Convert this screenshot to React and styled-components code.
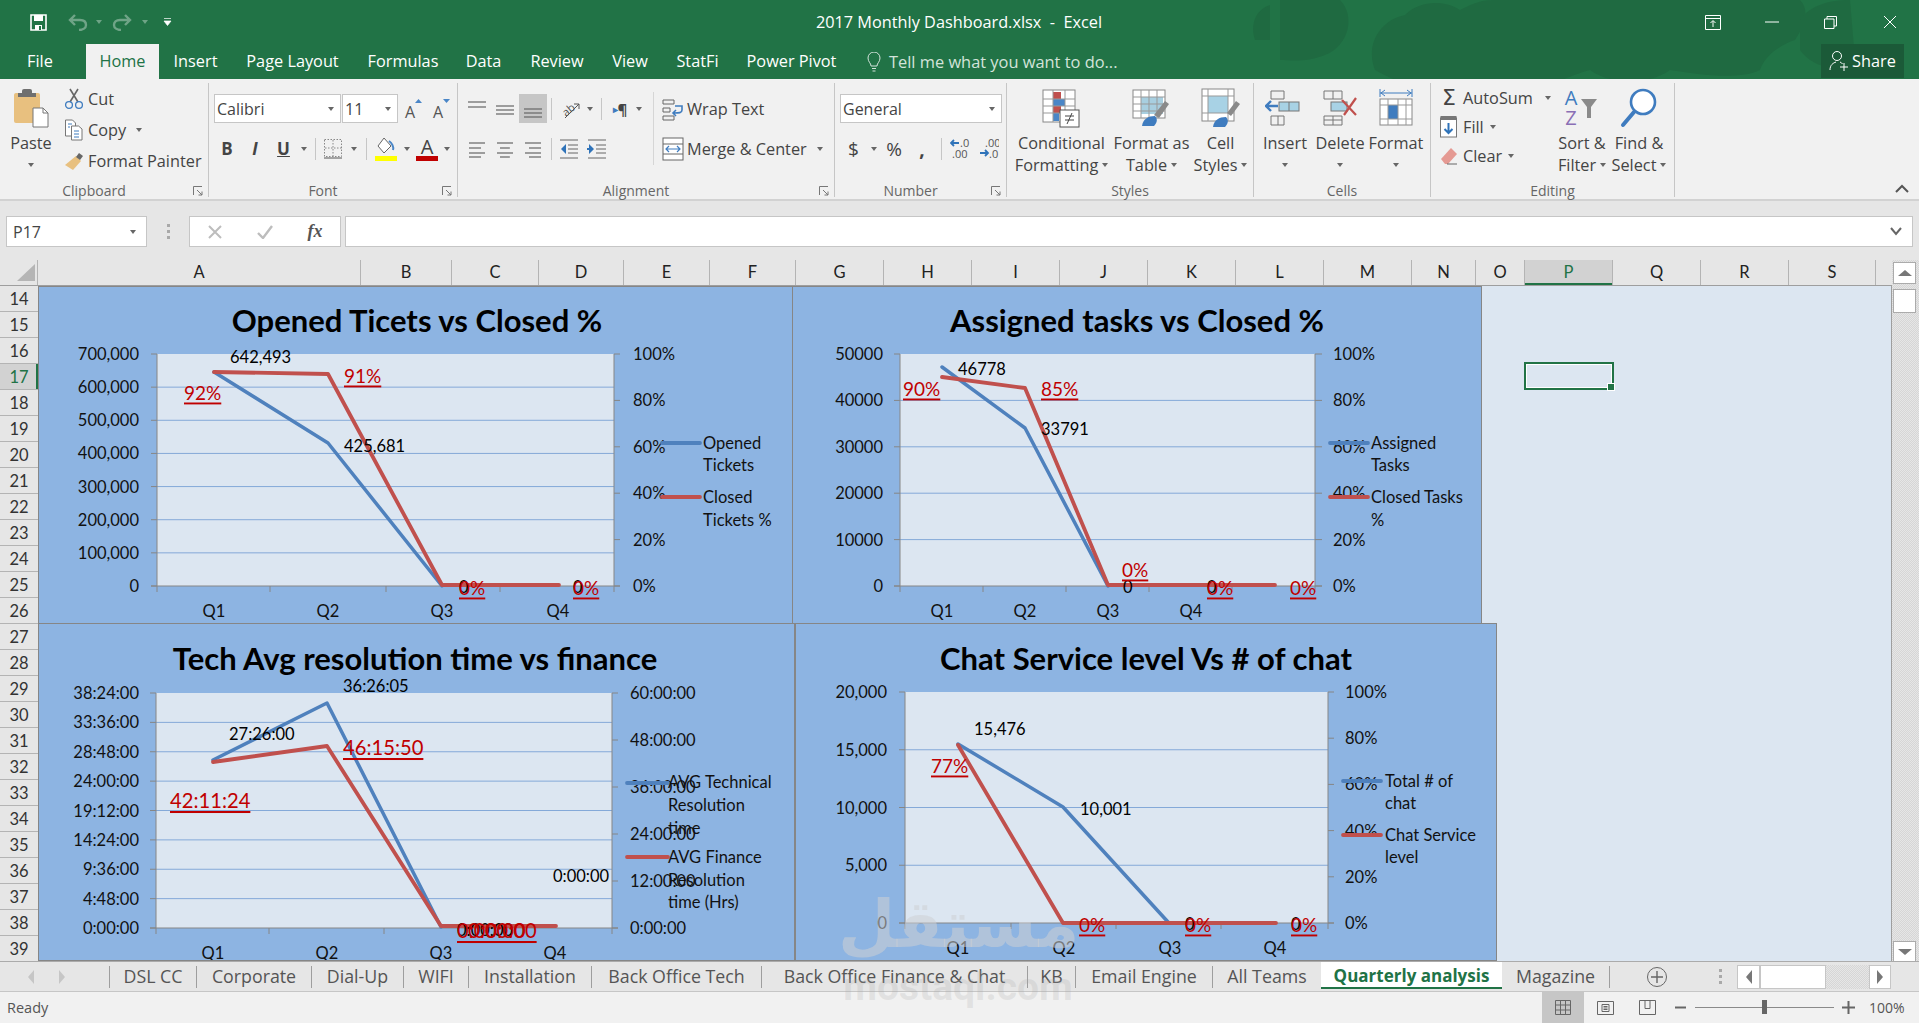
import React from "react";
import styled, { createGlobalStyle } from "styled-components";

const UI = `"Open Sans", "Noto Sans", sans-serif`;
const CAL = `Lato, "Open Sans", sans-serif`;
const FS = "16.3px";

const GlobalStyle = createGlobalStyle`
  html, body { margin: 0; padding: 0; background: #f1f1f1; }
  #root { height: 100vh; }
`;

const Page = styled.div`
  position: relative;
  width: 1919px;
  height: 1023px;
  overflow: hidden;
  display: flex;
  flex-direction: column;
  font-family: ${UI};
  color: #444;
`;

/* ---------- green header ---------- */
const Header = styled.header`
  position: relative;
  height: 79px;
  flex: none;
  background: #217346;
  color: #fff;
`;
const HeaderArt = styled.svg`
  position: absolute;
  inset: 0;
`;
const TitleRow = styled.div`
  position: relative;
  height: 44px;
  display: flex;
  align-items: center;
`;
const Qat = styled.div`
  display: flex;
  align-items: center;
  width: 620px;
  margin-right: -30px;
  padding-left: 28px;
  box-sizing: border-box;
`;
const QatSlot = styled.span`
  width: ${(p) => p.$w}px;
  display: flex;
  justify-content: center;
  opacity: ${(p) => (p.$dim ? 0.35 : 1)};
`;
const DocTitle = styled.div`
  width: 738px;
  text-align: center;
  font-size: ${FS};
  white-space: pre;
`;
const WinButtons = styled.div`
  display: flex;
  margin-left: auto;
`;
const WinBtn = styled.span`
  width: 59px;
  height: 40px;
  display: flex;
  align-items: center;
  justify-content: center;
`;
const TabRow = styled.nav`
  position: relative;
  height: 35px;
  display: flex;
`;
const RibbonTab = styled.div`
  width: ${(p) => p.$w}px;
  margin-left: ${(p) => p.$ml || 0}px;
  text-align: center;
  line-height: 35px;
  font-size: ${FS};
  white-space: nowrap;
  background: ${(p) => (p.$active ? "#f1f1f1" : "transparent")};
  color: ${(p) => (p.$active ? "#217346" : "#fff")};
`;
const TellMe = styled.div`
  display: flex;
  align-items: center;
  margin-left: 18px;
  gap: 7px;
  font-size: 16.4px;
  color: #d3e3da;
  white-space: nowrap;
`;
const ShareBtn = styled.div`
  margin-left: auto;
  margin-right: 15px;
  width: 83px;
  height: 34px;
  background: #1b5a38;
  display: flex;
  align-items: center;
  justify-content: center;
  gap: 3px;
  font-size: ${FS};
`;

/* ---------- ribbon ---------- */
const Ribbon = styled.section`
  height: 122px;
  flex: none;
  background: #f1f1f1;
  border-bottom: 2px solid #d2d2d2;
  box-sizing: border-box;
  display: flex;
  padding-top: 4px;
`;
const Group = styled.div`
  width: ${(p) => p.$w}px;
  height: 114px;
  box-sizing: border-box;
  border-right: 1px solid #c6c6c6;
  display: flex;
  flex-direction: column;
  flex: none;
`;
const GroupBody = styled.div`
  height: 98px;
  display: flex;
  flex: none;
`;
const GroupFoot = styled.div`
  display: grid;
  grid-template-columns: ${(p) => (p.$launcher ? "1fr auto 1fr 20px" : "1fr auto 1fr")};
  align-items: center;
  height: 16px;
  padding: 0 5px;
  font-size: 14px;
  color: #666;
`;
const Launcher = styled.svg`
  justify-self: end;
`;
const Collapse = styled.div`
  flex: 1;
  display: flex;
  align-items: flex-end;
  justify-content: flex-end;
  padding: 0 10px 6px 0;
`;
const BigButton = styled.div`
  width: ${(p) => p.$w}px;
  flex: none;
  display: flex;
  flex-direction: column;
  align-items: center;
  padding-top: 5px;
  font-size: ${FS};
  color: #444;
`;
const BigIcon = styled.div`
  height: 40px;
  margin-bottom: 4px;
  display: flex;
  align-items: center;
  justify-content: center;
`;
const Line = styled.div`
  height: 22px;
  line-height: 22px;
  white-space: nowrap;
  display: flex;
  align-items: center;
  gap: ${(p) => p.$gap ?? 4}px;
  margin-left: ${(p) => p.$ml || 0}px;
`;
const Caret = styled.span`
  display: inline-block;
  width: 0;
  height: 0;
  margin-left: ${(p) => p.$ml || 0}px;
  border-left: 3.5px solid transparent;
  border-right: 3.5px solid transparent;
  border-top: 4px solid ${(p) => p.$c || "#666"};
`;
const SmallCol = styled.div`
  width: ${(p) => p.$w}px;
  flex: none;
  padding-left: ${(p) => p.$pl || 0}px;
  box-sizing: border-box;
`;
const SmallRow = styled.div`
  height: ${(p) => p.$h || 31}px;
  display: flex;
  align-items: center;
  font-size: ${FS};
  white-space: nowrap;
  gap: 2px;
`;
const IconSlot = styled.span`
  width: 24px;
  flex: none;
  display: flex;
  justify-content: center;
`;
const SigmaGlyph = styled.span`
  font-family: "DejaVu Sans", sans-serif;
  font-size: 22px;
  line-height: 24px;
  color: #444;
`;
const ToolCol = styled.div`
  padding-left: 5px;
  padding-top: 11px;
  width: ${(p) => p.$w || "auto"}px;
  flex: none;
  box-sizing: border-box;
  font-size: ${FS};
`;
const ToolRow = styled.div`
  display: flex;
  align-items: center;
  height: 29px;
  margin-bottom: ${(p) => p.$mb || 0}px;
`;
const Slot = styled.span`
  width: ${(p) => p.$w}px;
  height: 29px;
  flex: none;
  display: flex;
  align-items: center;
  justify-content: center;
  background: ${(p) => (p.$on ? "#c6c6c6" : "transparent")};
  font: ${(p) => p.$font || "inherit"};
  color: #444;
`;
const PilcrowArrow = styled.span`
  color: #3f7cbf;
  font-size: 10px;
`;
const VRule = styled.span`
  width: 1px;
  height: 22px;
  background: #c6c6c6;
`;
const TallRule = styled.div`
  width: 1px;
  height: 73px;
  margin: 9px 2px 0 5px;
  background: #d6d6d6;
  flex: none;
`;
const ComboBox = styled.div`
  width: ${(p) => p.$w}px;
  height: 29px;
  box-sizing: border-box;
  flex: none;
  margin-right: ${(p) => p.$mr || 0}px;
  background: #fff;
  border: 1px solid #c6c6c6;
  display: flex;
  align-items: center;
  justify-content: space-between;
  padding: 0 6px 0 2px;
  font-size: 16px;
`;

/* ---------- formula bar ---------- */
const FormulaBar = styled.section`
  height: 59px;
  flex: none;
  box-sizing: border-box;
  background: #e6e6e6;
  display: flex;
  padding: 15px 6px 13px 6px;
`;
const Field = styled.div`
  box-sizing: border-box;
  width: ${(p) => (p.$w ? `${p.$w}px` : "auto")};
  flex: ${(p) => (p.$w ? "none" : 1)};
  background: #fff;
  border: 1px solid #c6c6c6;
  display: flex;
  align-items: center;
  justify-content: space-between;
  padding: ${(p) => (p.$flush ? "0" : "0 10px 0 6px")};
  font-size: 16px;
  margin-left: ${(p) => p.$ml || 0}px;
`;
const GripDots = styled.div`
  width: 42px;
  flex: none;
  display: flex;
  flex-direction: column;
  align-items: center;
  justify-content: center;
  gap: 3px;
  & > i { width: 3px; height: 3px; background: #a9a9a9; display: block; }
`;
const FxSlot = styled.span`
  width: 50px;
  display: flex;
  justify-content: center;
  font-family: "Liberation Serif", serif;
  font-style: italic;
  font-weight: 700;
  font-size: 18px;
  color: #555;
`;

/* ---------- sheet ---------- */
const Workspace = styled.div`
  height: 701px;
  flex: none;
  display: flex;
  background: #e6e6e6;
`;
const SheetSide = styled.div`
  width: 1892px;
  flex: none;
  display: flex;
  flex-direction: column;
`;
const ColHeads = styled.div`
  height: 26px;
  flex: none;
  display: flex;
  box-sizing: border-box;
  border-bottom: 1px solid #9e9e9e;
`;
const Corner = styled.div`
  width: 38px;
  flex: none;
  display: flex;
  justify-content: flex-end;
  align-items: center;
  padding-right: 2px;
  box-sizing: border-box;
  border-right: 1px solid #b4b4b4;
`;
const ColHead = styled.div`
  width: ${(p) => p.$w}px;
  flex: none;
  box-sizing: border-box;
  text-align: center;
  line-height: 25px;
  font-family: ${CAL};
  font-size: 16.5px;
  border-right: 1px solid #b4b4b4;
  background: ${(p) => (p.$on ? "#d2d2d2" : "transparent")};
  color: ${(p) => (p.$on ? "#217346" : "#222")};
  box-shadow: ${(p) => (p.$on ? "inset 0 -2px 0 #217346" : "none")};
`;
const SheetBody = styled.div`
  flex: 1;
  display: flex;
  min-height: 0;
  overflow: hidden;
`;
const RowHeads = styled.div`
  width: 38px;
  flex: none;
`;
const RowHead = styled.div`
  height: 26px;
  box-sizing: border-box;
  text-align: center;
  line-height: 26px;
  font-family: ${CAL};
  font-size: 16.5px;
  border-bottom: 1px solid #b4b4b4;
  background: ${(p) => (p.$on ? "#d2d2d2" : "transparent")};
  color: ${(p) => (p.$on ? "#217346" : "#333")};
  box-shadow: ${(p) => (p.$on ? "inset -2px 0 0 #217346" : "none")};
`;
const Canvas = styled.div`
  position: relative;
  flex: 1;
  background: #dce6f1;
  border-right: 1px solid #9e9e9e;
  overflow: hidden;
`;
const ChartFrame = styled.svg`
  position: absolute;
  left: ${(p) => p.$x - 38}px;
  top: ${(p) => p.$y - 286}px;
  width: ${(p) => p.$w}px;
  height: ${(p) => p.$h}px;
  background: #8db4e2;
  outline: 1px solid #868686;
  outline-offset: -1px;
  font-family: ${CAL};
`;
const SelectedCell = styled.div`
  position: absolute;
  left: ${1524 - 38}px;
  top: ${362 - 286}px;
  width: 90px;
  height: 28px;
  box-sizing: border-box;
  border: 2px solid #217346;
  outline: 1px solid #fff;
  outline-offset: -3px;
  &::after {
    content: "";
    position: absolute;
    right: -3px;
    bottom: -3px;
    width: 6px;
    height: 6px;
    background: #217346;
    border: 1px solid #fff;
  }
`;
const VScroll = styled.div`
  width: 27px;
  flex: none;
  display: flex;
  flex-direction: column;
  padding: 2px 3px 0 1px;
  box-sizing: border-box;
  background: repeating-conic-gradient(#d6d6d6 0 25%, #e6e6e6 0 50%) 0 0 / 2px 2px;
`;
const ScrollBtn = styled.div`
  height: ${(p) => p.$h || 22}px;
  flex: none;
  box-sizing: border-box;
  margin-top: ${(p) => p.$mt || 0}px;
  background: #fff;
  border: 1px solid #ababab;
  display: flex;
  align-items: center;
  justify-content: center;
`;
const Tri = styled.span`
  width: 0;
  height: 0;
  border-style: solid;
  border-color: transparent;
  ${(p) => p.$dir === "up" && `border-width: 0 7px 6px; border-bottom-color: #777;`}
  ${(p) => p.$dir === "down" && `border-width: 6px 7px 0; border-top-color: #777;`}
  ${(p) => p.$dir === "left" && `border-width: 7px 6px 7px 0; border-right-color: ${p.$c || "#777"};`}
  ${(p) => p.$dir === "right" && `border-width: 7px 0 7px 6px; border-left-color: ${p.$c || "#777"};`}
`;

/* ---------- tabs and status ---------- */
const SheetTabs = styled.section`
  height: 31px;
  flex: none;
  box-sizing: border-box;
  background: #e6e6e6;
  border-top: 1px solid #ababab;
  border-bottom: 1px solid #c6c6c6;
  display: flex;
`;
const TabNav = styled.div`
  width: 109px;
  flex: none;
  display: flex;
  align-items: center;
  padding-left: 28px;
  gap: 25px;
  box-sizing: border-box;
`;
const SheetTab = styled.div`
  width: ${(p) => p.$w}px;
  height: ${(p) => (p.$active ? 27 : 22)}px;
  margin-top: ${(p) => (p.$active ? 0 : 4)}px;
  flex: none;
  box-sizing: border-box;
  text-align: center;
  font-size: ${(p) => (p.$active ? "17px" : "17.8px")};
  line-height: ${(p) => (p.$active ? 27 : 20)}px;
  white-space: nowrap;
  color: ${(p) => (p.$active ? "#217346" : "#555")};
  font-weight: ${(p) => (p.$active ? 700 : 400)};
  background: ${(p) => (p.$active ? "#fff" : "transparent")};
  border-left: ${(p) => (p.$first ? "1px solid #9e9e9e" : "none")};
  border-right: ${(p) => (p.$active || p.$noRule ? "none" : "1px solid #9e9e9e")};
  box-shadow: ${(p) => (p.$active ? "inset 0 -2px 0 #217346" : "none")};
`;
const PlusSlot = styled.div`
  width: 94px;
  flex: none;
  display: flex;
  align-items: center;
  justify-content: center;
`;
const TabGrip = styled(GripDots)`
  width: 32px;
`;
const HScroll = styled.div`
  margin: 3px 0 0 1px;
  height: 24px;
  width: 154px;
  display: flex;
  background: repeating-conic-gradient(#d6d6d6 0 25%, #e6e6e6 0 50%) 0 0 / 2px 2px;
`;
const HBtn = styled.div`
  width: ${(p) => p.$w}px;
  margin-left: ${(p) => (p.$end ? "auto" : "0")};
  box-sizing: border-box;
  background: #fff;
  border: 1px solid #c6c6c6;
  display: flex;
  align-items: center;
  justify-content: center;
`;
const StatusBar = styled.footer`
  flex: 1;
  background: #f1f1f1;
  display: flex;
  align-items: center;
  padding-left: 7px;
  font-size: 14.5px;
  color: #555;
`;
const StatusRight = styled.div`
  margin-left: auto;
  height: 100%;
  display: flex;
  align-items: center;
`;
const ViewBtn = styled.span`
  width: ${(p) => p.$w}px;
  height: 100%;
  display: flex;
  align-items: center;
  justify-content: center;
  background: ${(p) => (p.$on ? "#c6c6c6" : "transparent")};
`;
const ZoomTrack = styled.div`
  position: relative;
  width: 139px;
  height: 1px;
  background: #8a8a8a;
  margin: 0 3px;
  &::after {
    content: "";
    position: absolute;
    left: 67px;
    top: -7px;
    width: 5px;
    height: 14px;
    background: #666;
  }
`;
const ZoomText = styled.span`
  width: 50px;
  margin-left: 10px;
  font-size: 14px;
  color: #555;
`;
const Watermark = styled.div`
  position: absolute;
  left: 838px;
  top: 880px;
  width: 240px;
  pointer-events: none;
  text-align: center;
  font-weight: 700;
`;
const WatermarkAr = styled.div`
  font-family: "DejaVu Sans", sans-serif;
  font-size: 66px;
  line-height: 90px;
  color: rgba(205, 208, 212, 0.55);
`;
const WatermarkEn = styled.div`
  font-family: Roboto, sans-serif;
  font-size: 39px;
  line-height: 34px;
  color: rgba(170, 170, 170, 0.22);
`;

/* ---------- small icons ---------- */
const Sv = ({ w = 24, h = 24, children }) => (
  <svg width={w} height={h} viewBox={`0 0 ${w} ${h}`}>{children}</svg>
);
const Lines = ({ ys, x1 = 2, x2 = 20, w = 22, h = 24, c = "#666" }) => (
  <Sv w={w} h={h}>
    {ys.map((y, i) => {
      const [a, b] = Array.isArray(x1) ? [x1[i], x2[i]] : [x1, x2];
      return <line key={i} x1={a} x2={b} y1={y} y2={y} stroke={c} strokeWidth="1.2" />;
    })}
  </Sv>
);
const LauncherIcon = () => (
  <Launcher width="10" height="10" viewBox="0 0 10 10">
    <path d="M.5 9V.5H9M4 4l5 5M9 5.5V9H5.5" fill="none" stroke="#777" />
  </Launcher>
);
const Foot = ({ label, launcher }) => (
  <GroupFoot $launcher={launcher}>
    <span />
    <span>{label}</span>
    <span />
    {launcher && <LauncherIcon />}
  </GroupFoot>
);

const PasteIcon = () => (
  <Sv w={36} h={40}>
    <rect x="1" y="5" width="26" height="30" rx="2" fill="#e8c07f" />
    <rect x="9" y="1" width="10" height="7" rx="2" fill="#6f6f6f" />
    <rect x="5" y="5" width="18" height="4" fill="#6f6f6f" />
    <path d="M20 20h10l5 5v14H20z" fill="#fff" stroke="#777" />
    <path d="M30 20v5h5" fill="none" stroke="#777" />
  </Sv>
);
const CutIcon = () => (
  <Sv w={20} h={24}>
    <path d="M6 2l8 13M14 2L6 15" stroke="#666" strokeWidth="1.6" />
    <circle cx="5" cy="18" r="3.4" fill="none" stroke="#3f7cbf" strokeWidth="1.3" />
    <circle cx="15" cy="18" r="3.4" fill="none" stroke="#3f7cbf" strokeWidth="1.3" />
  </Sv>
);
const CopyIcon = () => (
  <Sv w={20} h={24}>
    <path d="M1.5 2h7l3 3v13h-10z" fill="#fff" stroke="#777" />
    <path d="M7.5 8h7l3.5 3v11H7.5z" fill="#fff" stroke="#777" />
    <path d="M10 13h5M10 16h5M10 19h5M4 6h4M4 9h2" stroke="#3f7cbf" />
  </Sv>
);
const BrushIcon = () => (
  <Sv w={20} h={24}>
    <path d="M12 7l5 5-8 9-8-5z" fill="#e8c07f" />
    <path d="M12 8l3-4 4 3-3 4z" fill="#666" />
  </Sv>
);
const GrowA = ({ up }) => (
  <Sv w={20} h={22}>
    <text x="2" y="20" fontFamily={UI} fontSize="16" fill="#555">A</text>
    <path d={up ? "M12 5h7l-3.5-4z" : "M12 1h7l-3.5 4z"} fill="#4a86c7" />
  </Sv>
);
const BorderIcon = () => (
  <Sv w={18} h={20}>
    <rect x=".5" y=".5" width="17" height="17" fill="none" stroke="#888" strokeDasharray="1.5 1.5" />
    <path d="M9 1v17M1 9h17" stroke="#888" strokeDasharray="1.5 1.5" />
    <path d="M0 19h18" stroke="#555" />
  </Sv>
);
const FillIcon = () => (
  <Sv w={24} h={26}>
    <path d="M10 2l7 8-7 7-6-7z" fill="#fff" stroke="#666" />
    <path d="M15 5c3 2 5 6 4 9" fill="none" stroke="#4a86c7" strokeWidth="2" />
    <rect x="1" y="20" width="22" height="5" fill="#ffff00" />
  </Sv>
);
const FontColor = () => (
  <Sv w={24} h={26}>
    <text x="12" y="18" textAnchor="middle" fontFamily={UI} fontSize="20" fill="#444">A</text>
    <rect x="1" y="20" width="22" height="5" fill="#c00000" />
  </Sv>
);
const OrientIcon = () => (
  <Sv w={22} h={22}>
    <text x="2" y="15" fontFamily={UI} fontSize="11" fill="#555" transform="rotate(-40 10 10)">ab</text>
    <path d="M6 20L20 6M20 6h-5M20 6v5" stroke="#555" fill="none" />
  </Sv>
);
const IndentIcon = ({ flip }) => (
  <Sv w={20} h={22}>
    <path d="M1 2h18M9 7h10M9 11h10M9 15h10M1 20h18" stroke="#666" />
    <path d={flip ? "M2 6l5 5-5 5zM0 10h3v2H0z" : "M7 6l-5 5 5 5z"} fill="#2f73b9" />
  </Sv>
);
const WrapIcon = () => (
  <Sv w={22} h={24}>
    <path d="M1 3h11v4H1zM1 11h7v4H1zM1 19h11v4H1z" fill="none" stroke="#666" />
    <path d="M13 9h7v4c0 3-3 3-8 3M14 13l-3 3 3 3" fill="none" stroke="#3f7cbf" strokeWidth="1.6" />
  </Sv>
);
const MergeIcon = () => (
  <Sv w={22} h={24}>
    <rect x="1" y="1" width="20" height="22" fill="#fff" stroke="#666" />
    <path d="M1 7h20M1 17h20" stroke="#666" />
    <path d="M4 12h14M7 9l-3 3 3 3M15 9l3 3-3 3" fill="none" stroke="#3f7cbf" strokeWidth="1.2" />
  </Sv>
);
const DecIcon = ({ more }) => (
  <Sv w={20} h={24}>
    <text x={more ? 6 : 10} y="10" fontSize="11" fontFamily={UI} fill="#555">{more ? ".00" : ".0"}</text>
    <text x={more ? 10 : 2} y="21" fontSize="11" fontFamily={UI} fill="#555">{more ? ".0" : ".00"}</text>
    <path d={more ? "M1 16h7M6 13l3 3-3 3" : "M2 6h7M4 3L1 6l3 3"} fill="none" stroke="#2f73b9" strokeWidth="1.8" />
  </Sv>
);
const CondIcon = () => (
  <Sv w={40} h={40}>
    <rect x="1" y="2" width="32" height="32" fill="#fff" stroke="#888" />
    <rect x="11" y="4" width="8" height="7" fill="#c0504d" />
    <rect x="11" y="11" width="12" height="7" fill="#4a86c7" />
    <rect x="11" y="18" width="8" height="7" fill="#c0504d" />
    <rect x="11" y="25" width="6" height="8" fill="#4a86c7" />
    <path d="M1 11h32M1 18h32M1 25h32M11 2v32M23 2v32" stroke="#999" fill="none" />
    <rect x="18" y="22" width="19" height="17" fill="#fff" stroke="#555" />
    <path d="M23 28h9M23 32h9M30 25l-5 11" stroke="#444" />
  </Sv>
);
const TableIcon = () => (
  <Sv w={40} h={40}>
    <rect x="1" y="2" width="32" height="28" fill="#fff" stroke="#888" />
    <rect x="9" y="9" width="22" height="17" fill="#a8cfe0" />
    <path d="M1 9h32M1 16h32M1 23h32M9 2v28M17 2v28M25 2v28" stroke="#999" fill="none" />
    <path d="M22 27l11-14 4 3-10 14z" fill="#8a8a8a" />
    <path d="M10 38c1-7 6-10 13-10 3 3 2 7-1 10z" fill="#3f7cbf" />
  </Sv>
);
const CellIcon = () => (
  <Sv w={40} h={40}>
    <rect x="1" y="1" width="32" height="32" fill="#fff" stroke="#888" />
    <rect x="7" y="8" width="20" height="17" fill="#a8d2e5" />
    <path d="M7 1v32M27 1v32M1 8h32M1 25h32" stroke="#999" fill="none" />
    <path d="M26 25l9-12 4 3-9 12z" fill="#8a8a8a" />
    <path d="M12 39c1-7 6-10 13-10 3 3 2 7-1 10z" fill="#3f7cbf" />
  </Sv>
);
const InsertIcon = () => (
  <Sv w={40} h={38}>
    <path d="M6 2h13v8H6zM6 27h13v9H6zM13 27v9" fill="none" stroke="#777" />
    <rect x="14" y="13" width="20" height="9" fill="#a8d2e5" stroke="#777" />
    <path d="M24 13v9" stroke="#777" />
    <path d="M1 17h12M6 12l-5 5 5 5" fill="none" stroke="#3f7cbf" strokeWidth="2.4" />
  </Sv>
);
const DeleteIcon = () => (
  <Sv w={40} h={38}>
    <path d="M4 2h18v8H4zM4 27h18v9H4zM13 27v9M4 31h18M13 2v8" fill="none" stroke="#777" />
    <rect x="11" y="13" width="16" height="9" fill="#a8d2e5" stroke="#777" />
    <path d="M22 11l14 15M36 9L24 26" stroke="#c0504d" strokeWidth="2.2" />
  </Sv>
);
const FormatIcon = () => (
  <Sv w={38} h={40}>
    <path d="M3 5h32M3 1v8M35 1v8M8 2L4 5l4 3M30 2l4 3-4 3" fill="none" stroke="#3f7cbf" />
    <rect x="3" y="11" width="32" height="26" fill="#fff" stroke="#888" />
    <rect x="11" y="17" width="10" height="14" fill="#3f7cbf" />
    <path d="M11 11v26M21 11v26M29 11v26M3 17h32M3 31h32" stroke="#999" fill="none" />
  </Sv>
);
const FillDown = () => (
  <Sv w={18} h={24}>
    <rect x=".5" y="3" width="16" height="19" fill="#fff" stroke="#777" />
    <rect x=".5" y="1" width="16" height="4" fill="#777" />
    <path d="M8.5 8v10M4.5 14l4 4 4-4" fill="none" stroke="#2f73b9" strokeWidth="2" />
  </Sv>
);
const Eraser = () => (
  <Sv w={20} h={22}>
    <path d="M2 14L12 3l6 6-9 10H6z" fill="#e59a93" />
    <path d="M8 19h10" stroke="#666" />
  </Sv>
);
const SortIcon = () => (
  <Sv w={38} h={40}>
    <text x="8" y="17" textAnchor="middle" fontFamily={UI} fontSize="20" fill="#3f7cbf">A</text>
    <text x="8" y="37" textAnchor="middle" fontFamily={UI} fontSize="20" fill="#8a6fb5">Z</text>
    <path d="M18 11h16l-6 8v11h-4V19z" fill="#8a8a8a" />
  </Sv>
);
const FindIcon = () => (
  <Sv w={38} h={40}>
    <circle cx="23" cy="14" r="12" fill="#fff" stroke="#3f7cbf" strokeWidth="2.6" />
    <path d="M14 24L3 37" stroke="#3f7cbf" strokeWidth="4" strokeLinecap="round" />
  </Sv>
);

const artPaths = [
  "M1280 0h60c15 15 10 45-15 55-20 8-35 5-45 5z",
  "M1375 70c-10-25 5-50 30-55 15-15 40-15 55-5 20-10 25-10 40-10h300c10 10 5 25-5 40-15 5-30 15-35 30-20 10-60 5-90 0-20 15-60 15-80 0-20 5-60 25-90 30-40 0-90-10-125-30z",
  "M1255 40c-5-15 0-30 15-35v35z",
  "M1800 20c10-15 30-20 50-20l5 60c-20 15-45 5-55-10z",
];
const HeaderBar = () => (
  <Header>
    <HeaderArt width="1919" height="79" viewBox="0 0 1919 79">
      {artPaths.map((d, i) => <path key={i} d={d} fill="#1f6a41" />)}
    </HeaderArt>
    <TitleRow>
      <Qat>
        <QatSlot $w={20}>
          <svg width="17" height="17" viewBox="0 0 17 17">
            <path d="M1 1h15v15H1z" fill="none" stroke="#fff" strokeWidth="1.6" />
            <path d="M4 1h9v6H4zM5 11h7v5H5z" fill="#fff" />
            <rect x="9" y="12" width="2" height="4" fill="#217346" />
          </svg>
        </QatSlot>
        <QatSlot $w={20} $dim />
        <QatSlot $w={20} $dim>
          <svg width="20" height="18" viewBox="0 0 20 18">
            <path d="M2 7h10c4 0 6 2 6 5s-3 5-7 5M7 2L2 7l5 5" fill="none" stroke="#fff" strokeWidth="2.4" />
          </svg>
        </QatSlot>
        <QatSlot $w={22} $dim><Caret $c="#fff" /></QatSlot>
        <QatSlot $w={24} $dim>
          <svg width="20" height="18" viewBox="0 0 20 18">
            <path d="M18 7H8c-4 0-6 2-6 5s3 5 7 5M13 2l5 5-5 5" fill="none" stroke="#fff" strokeWidth="2.4" />
          </svg>
        </QatSlot>
        <QatSlot $w={22} $dim><Caret $c="#fff" /></QatSlot>
        <QatSlot $w={22}>
          <svg width="9" height="10" viewBox="0 0 9 10"><path d="M1 1.5h7M1 4h7l-3.5 4.5z" fill="#fff" stroke="#fff" strokeWidth=".7" /></svg>
        </QatSlot>
      </Qat>
      <DocTitle>2017 Monthly Dashboard.xlsx  -  Excel</DocTitle>
      <WinButtons>
        <WinBtn>
          <svg width="16" height="15" viewBox="0 0 16 15"><path d="M.5.5h15v14H.5zM.5 3.5h15M8 12V6M5.5 8L8 5.5 10.5 8" fill="none" stroke="#fff" /></svg>
        </WinBtn>
        <WinBtn><svg width="14" height="2" viewBox="0 0 14 2"><path d="M0 1h14" stroke="#fff" /></svg></WinBtn>
        <WinBtn>
          <svg width="13" height="13" viewBox="0 0 13 13"><path d="M.5 3h9.5v9.5H.5zM3 3V.5h9.5V10H10" fill="none" stroke="#fff" /></svg>
        </WinBtn>
        <WinBtn>
          <svg width="14" height="14" viewBox="0 0 14 14"><path d="M1 1l12 12M13 1L1 13" stroke="#fff" /></svg>
        </WinBtn>
      </WinButtons>
    </TitleRow>
    <TabRow>
      <RibbonTab $w={80}>File</RibbonTab>
      <RibbonTab $w={73} $ml={6} $active>Home</RibbonTab>
      <RibbonTab $w={73}>Insert</RibbonTab>
      <RibbonTab $w={121}>Page Layout</RibbonTab>
      <RibbonTab $w={100}>Formulas</RibbonTab>
      <RibbonTab $w={61}>Data</RibbonTab>
      <RibbonTab $w={86}>Review</RibbonTab>
      <RibbonTab $w={60}>View</RibbonTab>
      <RibbonTab $w={75}>StatFi</RibbonTab>
      <RibbonTab $w={113}>Power Pivot</RibbonTab>
      <TellMe>
        <svg width="16" height="20" viewBox="0 0 16 20">
          <path d="M5 14c0-3-3-4-3-8a6 6 0 0112 0c0 4-3 5-3 8zM6 16.5h4M6.5 19h3" fill="none" stroke="#d3e3da" />
        </svg>
        Tell me what you want to do...
      </TellMe>
      <ShareBtn>
        <svg width="20" height="22" viewBox="0 0 20 22">
          <circle cx="8" cy="6" r="4.5" fill="none" stroke="#fff" />
          <path d="M1 20c0-5 3-7 6-8M11 12c1 .5 2 1 2.5 2M11 17h8M15 13v8" fill="none" stroke="#fff" />
        </svg>
        Share
      </ShareBtn>
    </TabRow>
  </Header>
);

const RibbonBar = () => (
  <Ribbon>
    <Group $w={209}>
      <GroupBody>
        <BigButton $w={62}>
          <BigIcon><PasteIcon /></BigIcon>
          <Line>Paste</Line>
          <Line><Caret /></Line>
        </BigButton>
        <SmallCol $w={146}>
          <SmallRow><IconSlot><CutIcon /></IconSlot>Cut</SmallRow>
          <SmallRow><IconSlot><CopyIcon /></IconSlot>Copy<Caret $ml={8} /></SmallRow>
          <SmallRow><IconSlot><BrushIcon /></IconSlot>Format Painter</SmallRow>
        </SmallCol>
      </GroupBody>
      <Foot label="Clipboard" launcher />
    </Group>

    <Group $w={249}>
      <GroupBody>
        <ToolCol>
          <ToolRow $mb={11}>
            <ComboBox $w={127} $mr={1}>Calibri<Caret /></ComboBox>
            <ComboBox $w={56}>11<Caret /></ComboBox>
            <Slot $w={30}><GrowA up /></Slot>
            <Slot $w={25}><GrowA /></Slot>
          </ToolRow>
          <ToolRow>
            <Slot $w={26} $font={`700 17px ${UI}`}>B</Slot>
            <Slot $w={30} $font={`italic 700 17px ${UI}`}>I</Slot>
            <Slot $w={27} $font={`700 17px ${UI}`}><u>U</u></Slot>
            <Slot $w={14}><Caret /></Slot>
            <Slot $w={8}><VRule /></Slot>
            <Slot $w={28}><BorderIcon /></Slot>
            <Slot $w={14}><Caret /></Slot>
            <Slot $w={10}><VRule /></Slot>
            <Slot $w={30}><FillIcon /></Slot>
            <Slot $w={12}><Caret /></Slot>
            <Slot $w={28}><FontColor /></Slot>
            <Slot $w={12}><Caret /></Slot>
          </ToolRow>
        </ToolCol>
      </GroupBody>
      <Foot label="Font" launcher />
    </Group>

    <Group $w={377}>
      <GroupBody>
        <ToolCol $w={190}>
          <ToolRow $mb={11}>
            <Slot $w={28}><Lines ys={[5, 10]} /></Slot>
            <Slot $w={28}><Lines ys={[9, 13, 17]} /></Slot>
            <Slot $w={28} $on><Lines ys={[12, 16, 20]} /></Slot>
            <Slot $w={8}><VRule /></Slot>
            <Slot $w={30}><OrientIcon /></Slot>
            <Slot $w={10}><Caret /></Slot>
            <Slot $w={12}><VRule /></Slot>
            <Slot $w={26} $font={`700 15px ${UI}`}><PilcrowArrow>▸</PilcrowArrow>¶</Slot>
            <Slot $w={12}><Caret /></Slot>
          </ToolRow>
          <ToolRow>
            <Slot $w={28}><Lines ys={[6, 11, 16, 20]} x1={[3, 3, 3, 3]} x2={[19, 15, 19, 15]} /></Slot>
            <Slot $w={28}><Lines ys={[6, 11, 16, 20]} x1={[3, 6, 3, 6]} x2={[19, 16, 19, 16]} /></Slot>
            <Slot $w={28}><Lines ys={[6, 11, 16, 20]} x1={[3, 7, 3, 7]} x2={[19, 19, 19, 19]} /></Slot>
            <Slot $w={8}><VRule /></Slot>
            <Slot $w={28}><IndentIcon /></Slot>
            <Slot $w={28}><IndentIcon flip /></Slot>
          </ToolRow>
        </ToolCol>
        <TallRule />
        <ToolCol>
          <ToolRow $mb={11}>
            <IconSlot><WrapIcon /></IconSlot>
            <Line $ml={2}>Wrap Text</Line>
          </ToolRow>
          <ToolRow>
            <IconSlot><MergeIcon /></IconSlot>
            <Line $ml={2} $gap={10}>Merge &amp; Center<Caret /></Line>
          </ToolRow>
        </ToolCol>
      </GroupBody>
      <Foot label="Alignment" launcher />
    </Group>

    <Group $w={172}>
      <GroupBody>
        <ToolCol>
          <ToolRow $mb={11}>
            <ComboBox $w={162}>General<Caret /></ComboBox>
          </ToolRow>
          <ToolRow>
            <Slot $w={27} $font={`400 19px ${UI}`}>$</Slot>
            <Slot $w={14}><Caret /></Slot>
            <Slot $w={26} $font={`400 19px ${UI}`}>%</Slot>
            <Slot $w={30} $font={`700 19px ${UI}`}>,</Slot>
            <Slot $w={8}><VRule /></Slot>
            <Slot $w={30}><DecIcon /></Slot>
            <Slot $w={28}><DecIcon more /></Slot>
          </ToolRow>
        </ToolCol>
      </GroupBody>
      <Foot label="Number" launcher />
    </Group>

    <Group $w={247}>
      <GroupBody>
        <BigButton $w={109}>
          <BigIcon><CondIcon /></BigIcon>
          <Line>Conditional</Line>
          <Line>Formatting<Caret /></Line>
        </BigButton>
        <BigButton $w={71}>
          <BigIcon><TableIcon /></BigIcon>
          <Line>Format as</Line>
          <Line>Table<Caret /></Line>
        </BigButton>
        <BigButton $w={67}>
          <BigIcon><CellIcon /></BigIcon>
          <Line>Cell</Line>
          <Line>Styles<Caret /></Line>
        </BigButton>
      </GroupBody>
      <Foot label="Styles" />
    </Group>

    <Group $w={177}>
      <GroupBody>
        <BigButton $w={62}>
          <BigIcon><InsertIcon /></BigIcon>
          <Line>Insert</Line>
          <Line><Caret /></Line>
        </BigButton>
        <BigButton $w={48}>
          <BigIcon><DeleteIcon /></BigIcon>
          <Line>Delete</Line>
          <Line><Caret /></Line>
        </BigButton>
        <BigButton $w={64}>
          <BigIcon><FormatIcon /></BigIcon>
          <Line>Format</Line>
          <Line><Caret /></Line>
        </BigButton>
      </GroupBody>
      <Foot label="Cells" />
    </Group>

    <Group $w={244}>
      <GroupBody>
        <SmallCol $w={126} $pl={6}>
          <SmallRow $h={29}>
            <IconSlot><SigmaGlyph>Σ</SigmaGlyph></IconSlot>
            AutoSum<Caret $ml={10} />
          </SmallRow>
          <SmallRow $h={29}><IconSlot><FillDown /></IconSlot>Fill<Caret $ml={4} /></SmallRow>
          <SmallRow $h={29}><IconSlot><Eraser /></IconSlot>Clear<Caret $ml={4} /></SmallRow>
        </SmallCol>
        <BigButton $w={50}>
          <BigIcon><SortIcon /></BigIcon>
          <Line>Sort &amp;</Line>
          <Line>Filter<Caret /></Line>
        </BigButton>
        <BigButton $w={64}>
          <BigIcon><FindIcon /></BigIcon>
          <Line>Find &amp;</Line>
          <Line>Select<Caret /></Line>
        </BigButton>
      </GroupBody>
      <Foot label="Editing" />
    </Group>

    <Collapse>
      <svg width="14" height="9" viewBox="0 0 14 9"><path d="M1 8l6-6 6 6" fill="none" stroke="#555" strokeWidth="2" /></svg>
    </Collapse>
  </Ribbon>
);

const FormulaRow = () => (
  <FormulaBar>
    <Field $w={141}>P17<Caret /></Field>
    <GripDots><i /><i /><i /></GripDots>
    <Field $w={152} $flush>
      <FxSlot>
        <svg width="14" height="14" viewBox="0 0 14 14"><path d="M1 1l12 12M13 1L1 13" stroke="#bdbdbd" strokeWidth="2" /></svg>
      </FxSlot>
      <FxSlot>
        <svg width="16" height="14" viewBox="0 0 16 14"><path d="M1 8l5 5L15 1" fill="none" stroke="#bdbdbd" strokeWidth="2.4" /></svg>
      </FxSlot>
      <FxSlot>fx</FxSlot>
    </Field>
    <Field $ml={4}>
      <span />
      <svg width="12" height="9" viewBox="0 0 12 9"><path d="M1 1l5 6 5-6" fill="none" stroke="#666" strokeWidth="2" /></svg>
    </Field>
  </FormulaBar>
);

/* ---------- charts ---------- */
const BLUE = "#4f81bd";
const RED = "#c0504d";
const pts = (a) => a.map((p) => p.join(",")).join(" ");

const charts = [
  {
    x: 38, y: 286, w: 755, h: 338, title: "Opened Ticets vs Closed %", titleX: 417, titleY: 320,
    plot: [157, 354, 614, 586],
    left: ["700,000", "600,000", "500,000", "400,000", "300,000", "200,000", "100,000", "0"],
    leftX: 139, tickL: 151, tickR: 620, rightX: 633,
    right: ["100%", "80%", "60%", "40%", "20%", "0%"],
    xticks: [157, 270, 386, 500, 614],
    cats: [[214, "Q1"], [328, "Q2"], [442, "Q3"], [558, "Q4"]], catY: 611,
    blue: [[214, 372], [328, 443], [442, 586]],
    red: [[214, 372], [328, 374], [442, 585], [559, 585]],
    black: [[230, 357, "642,493"], [344, 446, "425,681"], [459, 587, "0"], [573, 587, "0"]],
    reds: [[184, 392, "92%"], [344, 375, "91%"], [459, 587, "0%"], [573, 587, "0%"]],
    legX: [662, 700, 703],
    legend: [[443, BLUE, [[443, "Opened"], [465, "Tickets"]]], [497, RED, [[497, "Closed"], [520, "Tickets %"]]]],
  },
  {
    x: 792, y: 286, w: 690, h: 338, title: "Assigned tasks vs Closed %", titleX: 1137, titleY: 320,
    plot: [900, 354, 1315, 586],
    left: ["50000", "40000", "30000", "20000", "10000", "0"],
    leftX: 883, tickL: 894, tickR: 1322, rightX: 1333,
    right: ["100%", "80%", "60%", "40%", "20%", "0%"],
    xticks: [900, 983, 1066, 1149, 1232, 1315],
    cats: [[942, "Q1"], [1025, "Q2"], [1108, "Q3"], [1191, "Q4"]], catY: 611,
    blue: [[942, 367], [1025, 428], [1108, 586]],
    red: [[942, 377], [1025, 388], [1108, 585], [1275, 585]],
    black: [[958, 369, "46778"], [1041, 429, "33791"], [1123, 587, "0"], [1207, 587, "0"]],
    reds: [[903, 388, "90%"], [1041, 388, "85%"], [1122, 569, "0%"], [1207, 587, "0%"], [1290, 587, "0%"]],
    legX: [1330, 1368, 1371],
    legend: [[443, BLUE, [[443, "Assigned"], [465, "Tasks"]]], [497, RED, [[497, "Closed Tasks"], [520, "%"]]]],
  },
  {
    x: 38, y: 623, w: 757, h: 338, title: "Tech Avg resolution time vs finance", titleX: 415, titleY: 658, redSize: 20.2,
    plot: [156, 693, 612, 928],
    left: ["38:24:00", "33:36:00", "28:48:00", "24:00:00", "19:12:00", "14:24:00", "9:36:00", "4:48:00", "0:00:00"],
    leftX: 139, tickL: 150, tickR: 618, rightX: 630,
    right: ["60:00:00", "48:00:00", "36:00:00", "24:00:00", "12:00:00", "0:00:00"],
    xticks: [156, 269, 384, 498, 612],
    cats: [[213, "Q1"], [327, "Q2"], [441, "Q3"], [555, "Q4"]], catY: 953,
    blue: [[213, 760], [327, 703], [441, 927]],
    red: [[213, 762], [327, 746], [441, 926], [556, 926]],
    black: [[343, 686, "36:26:05"], [229, 734, "27:26:00"], [553, 876, "0:00:00"], [457, 930, "0:00:00"]],
    reds: [[343, 747, "46:15:50"], [170, 800, "42:11:24"], [457, 930, "0:00:00"], [468, 930, "0:00:00"]],
    legX: [627, 668, 668],
    legend: [
      [783, BLUE, [[782, "AVG Technical"], [805, "Resolution"], [828, "time"]]],
      [857, RED, [[857, "AVG Finance"], [880, "Resolution"], [902, "time (Hrs)"]]],
    ],
  },
  {
    x: 795, y: 623, w: 702, h: 338, title: "Chat Service level Vs # of chat", titleX: 1146, titleY: 658,
    plot: [905, 692, 1328, 923],
    left: ["20,000", "15,000", "10,000", "5,000", "0"],
    leftX: 887, tickL: 899, tickR: 1334, rightX: 1345,
    right: ["100%", "80%", "60%", "40%", "20%", "0%"],
    xticks: [905, 1011, 1116, 1221, 1328],
    cats: [[958, "Q1"], [1064, "Q2"], [1170, "Q3"], [1275, "Q4"]], catY: 948,
    blue: [[958, 744], [1063, 807], [1168, 922]],
    red: [[958, 745], [1063, 923], [1276, 923]],
    black: [[974, 729, "15,476"], [1080, 809, "10,001"], [1185, 924, "0"], [1291, 924, "0"]],
    reds: [[931, 765, "77%"], [1079, 924, "0%"], [1185, 924, "0%"], [1291, 924, "0%"]],
    legX: [1343, 1381, 1385],
    legend: [[781, BLUE, [[781, "Total # of"], [803, "chat"]]], [835, RED, [[835, "Chat Service"], [857, "level"]]]],
  },
];

const AXIS = "#868686";
const GRID = "#84a9d8";
const Chart = ({ c }) => {
  const [px1, py1, px2, py2] = c.plot;
  const stepL = (py2 - py1) / (c.left.length - 1);
  const stepR = (py2 - py1) / (c.right.length - 1);
  const T = { fontSize: 16.5, dominantBaseline: "central", fill: "#111" };
  return (
    <ChartFrame $x={c.x} $y={c.y} $w={c.w} $h={c.h} viewBox={`${c.x} ${c.y} ${c.w} ${c.h}`}>
      <text x={c.titleX} y={c.titleY} textAnchor="middle" fontSize="31" fontWeight="700" fill="#000" dominantBaseline="central">
        {c.title}
      </text>
      <rect x={px1} y={py1} width={px2 - px1} height={py2 - py1} fill="#dce6f1" />
      {c.left.map((l, i) => {
        const y = py1 + stepL * i;
        return (
          <g key={l + i}>
            {i > 0 && i < c.left.length - 1 && <line x1={px1} x2={px2} y1={y} y2={y} stroke={GRID} />}
            <line x1={c.tickL} x2={px1} y1={y} y2={y} stroke={AXIS} />
            <text {...T} x={c.leftX} y={y} textAnchor="end">{l}</text>
          </g>
        );
      })}
      {c.right.map((l, i) => {
        const y = py1 + stepR * i;
        return (
          <g key={l + i}>
            <line x1={px2} x2={c.tickR} y1={y} y2={y} stroke={AXIS} />
            <text {...T} x={c.rightX} y={y}>{l}</text>
          </g>
        );
      })}
      <path d={`M${px1} ${py1}V${py2}M${px2} ${py1}V${py2}M${c.tickL} ${py2}H${c.tickR}`} stroke={AXIS} fill="none" />
      {c.xticks.map((x) => <line key={x} x1={x} x2={x} y1={py2} y2={py2 + 6} stroke={AXIS} />)}
      {c.cats.map(([x, l]) => <text key={l} {...T} x={x} y={c.catY} textAnchor="middle">{l}</text>)}
      <polyline points={pts(c.blue)} fill="none" stroke={BLUE} strokeWidth="3.5" strokeLinecap="round" strokeLinejoin="round" />
      <polyline points={pts(c.red)} fill="none" stroke={RED} strokeWidth="3.8" strokeLinecap="round" strokeLinejoin="round" />
      {c.black.map(([x, y, l], i) => <text key={i} {...T} x={x} y={y} fill="#000">{l}</text>)}
      {c.reds.map(([x, y, l], i) => (
        <text key={i} x={x} y={y} fontSize={c.redSize || 19} dominantBaseline="central" fill="#c00000" textDecoration="underline">{l}</text>
      ))}
      {c.legend.map(([y, color, rows]) => (
        <g key={y}>
          <line x1={c.legX[0]} x2={c.legX[1]} y1={y} y2={y} stroke={color} strokeWidth="3.8" strokeLinecap="round" />
          {rows.map(([ty, l]) => <text key={ty} {...T} x={c.legX[2]} y={ty}>{l}</text>)}
        </g>
      ))}
    </ChartFrame>
  );
};

const columns = [
  ["A", 323], ["B", 91], ["C", 87], ["D", 85], ["E", 86], ["F", 86], ["G", 88], ["H", 88], ["I", 88], ["J", 88],
  ["K", 88], ["L", 88], ["M", 88], ["N", 64], ["O", 49], ["P", 88], ["Q", 88], ["R", 88], ["S", 87],
];
const rows = Array.from({ length: 26 }, (_, i) => i + 14);
const sheetTabs = [
  ["DSL CC", 88], ["Corporate", 115], ["Dial-Up", 92], ["WIFI", 65], ["Installation", 123], ["Back Office Tech", 170],
  ["Back Office Finance & Chat", 266], ["KB", 48], ["Email Engine", 137], ["All Teams", 108],
];

export default function App() {
  return (
    <Page>
      <GlobalStyle />
      <HeaderBar />
      <RibbonBar />
      <FormulaRow />
      <Workspace>
        <SheetSide>
          <ColHeads>
            <Corner>
              <svg width="18" height="17" viewBox="0 0 18 17"><path d="M0 17L18 0v17z" fill="#b5b5b5" /></svg>
            </Corner>
            {columns.map(([l, w]) => <ColHead key={l} $w={w} $on={l === "P"}>{l}</ColHead>)}
          </ColHeads>
          <SheetBody>
            <RowHeads>
              {rows.map((r) => <RowHead key={r} $on={r === 17}>{r}</RowHead>)}
            </RowHeads>
            <Canvas>
              {charts.map((c) => <Chart key={c.title} c={c} />)}
              <SelectedCell />
            </Canvas>
          </SheetBody>
        </SheetSide>
        <VScroll>
          <ScrollBtn $h={22}><Tri $dir="up" /></ScrollBtn>
          <ScrollBtn $h={24} $mt={5} />
          <ScrollBtn $h={22} $mt={628}><Tri $dir="down" /></ScrollBtn>
        </VScroll>
      </Workspace>
      <SheetTabs>
        <TabNav>
          <Tri $dir="left" $c="#c6c6c6" />
          <Tri $dir="right" $c="#c6c6c6" />
        </TabNav>
        {sheetTabs.map(([l, w], i) => <SheetTab key={l} $w={w} $first={i === 0} $noRule={i === sheetTabs.length - 1}>{l}</SheetTab>)}
        <SheetTab $w={181} $active>Quarterly analysis</SheetTab>
        <SheetTab $w={108}>Magazine</SheetTab>
        <PlusSlot>
          <svg width="22" height="22" viewBox="0 0 22 22">
            <circle cx="11" cy="11" r="9.5" fill="none" stroke="#666" />
            <path d="M11 5v12M5 11h12" stroke="#666" strokeWidth="1.4" />
          </svg>
        </PlusSlot>
        <TabGrip><i /><i /><i /></TabGrip>
        <HScroll>
          <HBtn $w={23}><Tri $dir="left" /></HBtn>
          <HBtn $w={66} />
          <HBtn $w={22} $end><Tri $dir="right" /></HBtn>
        </HScroll>
      </SheetTabs>
      <StatusBar>
        Ready
        <StatusRight>
          <ViewBtn $w={42} $on>
            <svg width="16" height="15" viewBox="0 0 16 15"><path d="M.5.5h15v14H.5zM.5 5h15M.5 10h15M5.5.5v14M10.5.5v14" fill="none" stroke="#666" /></svg>
          </ViewBtn>
          <ViewBtn $w={42}>
            <svg width="17" height="14" viewBox="0 0 17 14"><path d="M.5.5h16v13H.5zM5 3.5h7v7H5zM6.5 5.5h4M6.5 7h4M6.5 8.5h4" fill="none" stroke="#666" /></svg>
          </ViewBtn>
          <ViewBtn $w={42}>
            <svg width="17" height="15" viewBox="0 0 17 15"><path d="M.5.5h16v14H.5zM6 .5v8h5v-8" fill="none" stroke="#666" /></svg>
          </ViewBtn>
          <ViewBtn $w={24}><svg width="11" height="3" viewBox="0 0 11 3"><path d="M0 1.5h11" stroke="#666" strokeWidth="2" /></svg></ViewBtn>
          <ZoomTrack />
          <ViewBtn $w={22}><svg width="13" height="13" viewBox="0 0 13 13"><path d="M0 6.5h13M6.5 0v13" stroke="#666" strokeWidth="2" /></svg></ViewBtn>
          <ZoomText>100%</ZoomText>
        </StatusRight>
      </StatusBar>
      <Watermark>
        <WatermarkAr>مستقل</WatermarkAr>
        <WatermarkEn>mostaql.com</WatermarkEn>
      </Watermark>
    </Page>
  );
}
